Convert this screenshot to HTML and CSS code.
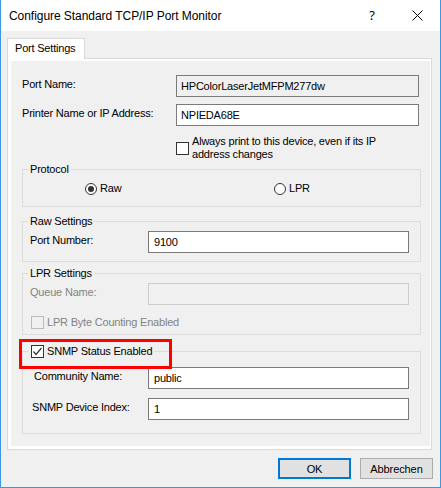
FILE: index.html
```html
<!DOCTYPE html>
<html lang="en">
<head>
    <meta charset="UTF-8">
    <meta name="viewport" content="width=device-width, initial-scale=1.0">
    <title>Configure Standard TCP/IP Port Monitor</title>
    <link rel="stylesheet" href="styles.css">
</head>
<body>
    <div class="window">
        <!-- title bar -->
        <div class="titlebar">
            <span class="title">Configure Standard TCP/IP Port Monitor</span>
            <span class="cap-btn help">?</span>
            <span class="cap-btn close">
                <svg width="11" height="11" viewBox="0 0 11 11"><path d="M0.5 0.5L10.5 10.5M10.5 0.5L0.5 10.5" stroke="#000" stroke-width="1"/></svg>
            </span>
        </div>
        <div class="client">
            <div class="tabs"><div class="tab">Port Settings</div></div>
            <div class="panel">
                <div class="page">
                    <div class="form">
                        <label class="lbl">Port Name:</label>
                        <div class="field readonly">HPColorLaserJetMFPM277dw</div>
                        <label class="lbl">Printer Name or IP Address:</label>
                        <div class="field">NPIEDA68E</div>
                    </div>
                    <div class="check-row always">
                        <span class="checkbox"></span>
                        <span>Always print to this device, even if its IP<br>address changes</span>
                    </div>

                    <fieldset class="group protocol">
                        <legend>Protocol</legend>
                        <div class="radios">
                            <span class="radio-item raw"><span class="radio on"></span>Raw</span>
                            <span class="radio-item"><span class="radio"></span>LPR</span>
                        </div>
                    </fieldset>

                    <fieldset class="group raw-set">
                        <legend>Raw Settings</legend>
                        <div class="grid">
                            <label class="lbl">Port Number:</label>
                            <div class="field">9100</div>
                        </div>
                    </fieldset>

                    <fieldset class="group lpr-set">
                        <legend>LPR Settings</legend>
                        <div class="grid">
                            <label class="lbl disabled">Queue Name:</label>
                            <div class="field off"></div>
                        </div>
                        <div class="check-row byte">
                            <span class="checkbox off"></span>
                            <span class="disabled">LPR Byte Counting Enabled</span>
                        </div>
                    </fieldset>

                    <fieldset class="group snmp">
                        <legend class="snmp-legend">
                            <span class="check-row">
                                <span class="checkbox">
                                    <svg width="11" height="11" viewBox="0 0 11 11"><polyline points="1.5,5.5 4,8.5 9.5,2" fill="none" stroke="#333" stroke-width="1.2"/></svg>
                                </span>
                                <span>SNMP Status Enabled</span>
                            </span>
                        </legend>
                        <div class="grid rows">
                            <label class="lbl community">Community Name:</label>
                            <div class="field">public</div>
                            <label class="lbl index">SNMP Device Index:</label>
                            <div class="field">1</div>
                        </div>
                    </fieldset>
                </div>
            </div>
            <div class="buttons">
                <button class="btn default">OK</button>
                <button class="btn">Abbrechen</button>
            </div>
        </div>
    </div>
</body>
</html>
```

FILE: styles.css
```css
*{
    margin: 0;
    padding: 0;
    box-sizing: border-box;
}
body{
    width: 441px;
    height: 488px;
    overflow: hidden;
    background-color: #fff;
    font-family: "Liberation Sans", Arial, sans-serif;
    font-size: 11px;
    line-height: 13px;
    letter-spacing: -0.2px;
    color: #000;
}
.window{
    height: 488px;
    border: 1px solid #3a97e4;
    border-top: 0;
    background-color: #f0f0f0;
    display: flex;
    flex-direction: column;
}
.titlebar{
    height: 31px;
    background-color: #fff;
    display: flex;
    align-items: center;
    padding-left: 8px;
}
.title{
    flex: 1;
    font-family: "Liberation Sans", Arial, sans-serif;
    font-size: 12px;
    line-height: 16px;
    letter-spacing: -0.05px;
}
.cap-btn{
    height: 31px;
    display: flex;
    align-items: center;
    justify-content: center;
}
.help{
    width: 46px;
    font-family: "Noto Sans", sans-serif;
    font-size: 13px;
}
.close{
    width: 45px;
}
.client{
    flex: 1;
    padding: 7px 8px 0 6px;
}
.tab{
    display: inline-block;
    position: relative;
    z-index: 1;
    width: 78px;
    height: 21px;
    margin-bottom: -1px;
    padding: 3px 0 0 7px;
    border: 1px solid #d9d9d9;
    border-bottom: 0;
    background-color: #fff;
}
.tabs{
    height: 20px;
}
.panel{
    height: 392px;
    border: 1px solid #d9d9d9;
    background-color: #fff;
    padding: 2px 1px 3px 3px;
}
.page{
    height: 100%;
    background-color: #f0f0f0;
    padding: 14px 9px 0 11px;
}
.form{
    display: grid;
    grid-template-columns: 154px 243px;
    grid-auto-rows: 22px;
    row-gap: 7px;
}
.lbl{
    padding-top: 3px;
}
.field{
    height: 22px;
    border: 1px solid #7a7a7a;
    background-color: #fff;
    padding: 0 4px;
    line-height: 20px;
    white-space: nowrap;
}
.field.readonly{
    background-color: #f0f0f0;
}
.field.off{
    border-color: #cccccc;
    background-color: #f0f0f0;
}
.disabled{
    color: #838383;
}
.check-row{
    display: flex;
    align-items: center;
    gap: 3px;
}
.always{
    margin: 9px 0 0 154px;
}
.checkbox{
    width: 13px;
    height: 13px;
    flex: none;
    border: 1px solid #333;
    background-color: #fff;
}
.checkbox svg{
    display: block;
}
.checkbox.off{
    border-color: #bcbcbc;
    background-color: #f0f0f0;
}
.group{
    border: 1px solid #dcdcdc;
    padding: 0 10px 0 7px;
    min-width: 0;
}
.group legend{
    padding: 0 2px;
    margin-left: -2px;
    line-height: 13px;
}
.protocol{
    margin-top: 2px;
    padding-top: 6px;
    padding-bottom: 11px;
}
.radios{
    display: flex;
    height: 13px;
}
.radio-item{
    display: flex;
    align-items: center;
    gap: 3px;
}
.raw{
    margin-left: 55px;
    width: 189px;
}
.radio{
    width: 12px;
    height: 12px;
    border: 1px solid #333;
    border-radius: 50%;
    background-color: #fff;
    display: flex;
    align-items: center;
    justify-content: center;
}
.radio.on::after{
    content: "";
    width: 6px;
    height: 6px;
    border-radius: 50%;
    background-color: #333;
}
.grid{
    display: grid;
    grid-template-columns: 118px 261px;
    grid-auto-rows: 22px;
    row-gap: 9px;
}
.group .field{
    padding-left: 5px;
}
.raw-set{
    margin-top: 8px;
    padding-top: 3px;
    padding-bottom: 8px;
}
.lpr-set{
    margin-top: 5px;
    padding-top: 3px;
    padding-bottom: 5px;
}
.byte{
    margin: 11px 0 0 1px;
}
.snmp{
    margin-top: 10px;
    padding-top: 9px;
    padding-bottom: 13px;
}
.group .snmp-legend{
    position: relative;
    margin-left: -1px;
}
/* red highlight box drawn over the legend */
.snmp-legend::after{
    content: "";
    position: absolute;
    left: -10px;
    top: -6px;
    width: 147px;
    height: 24px;
    border: 3px solid #f00;
}
.community{
    padding-left: 4px;
}
.index{
    padding-left: 2px;
}
.buttons{
    display: flex;
    justify-content: flex-end;
    gap: 9px;
    margin: 8px -1px 0 0;
}
.btn{
    width: 73px;
    height: 21px;
    border: 1px solid #adadad;
    background-color: #e1e1e1;
    font-family: "Liberation Sans", Arial, sans-serif;
    font-size: 11px;
    letter-spacing: -0.1px;
    color: #000;
}
.btn.default{
    border: 2px solid #0078d7;
}
```
